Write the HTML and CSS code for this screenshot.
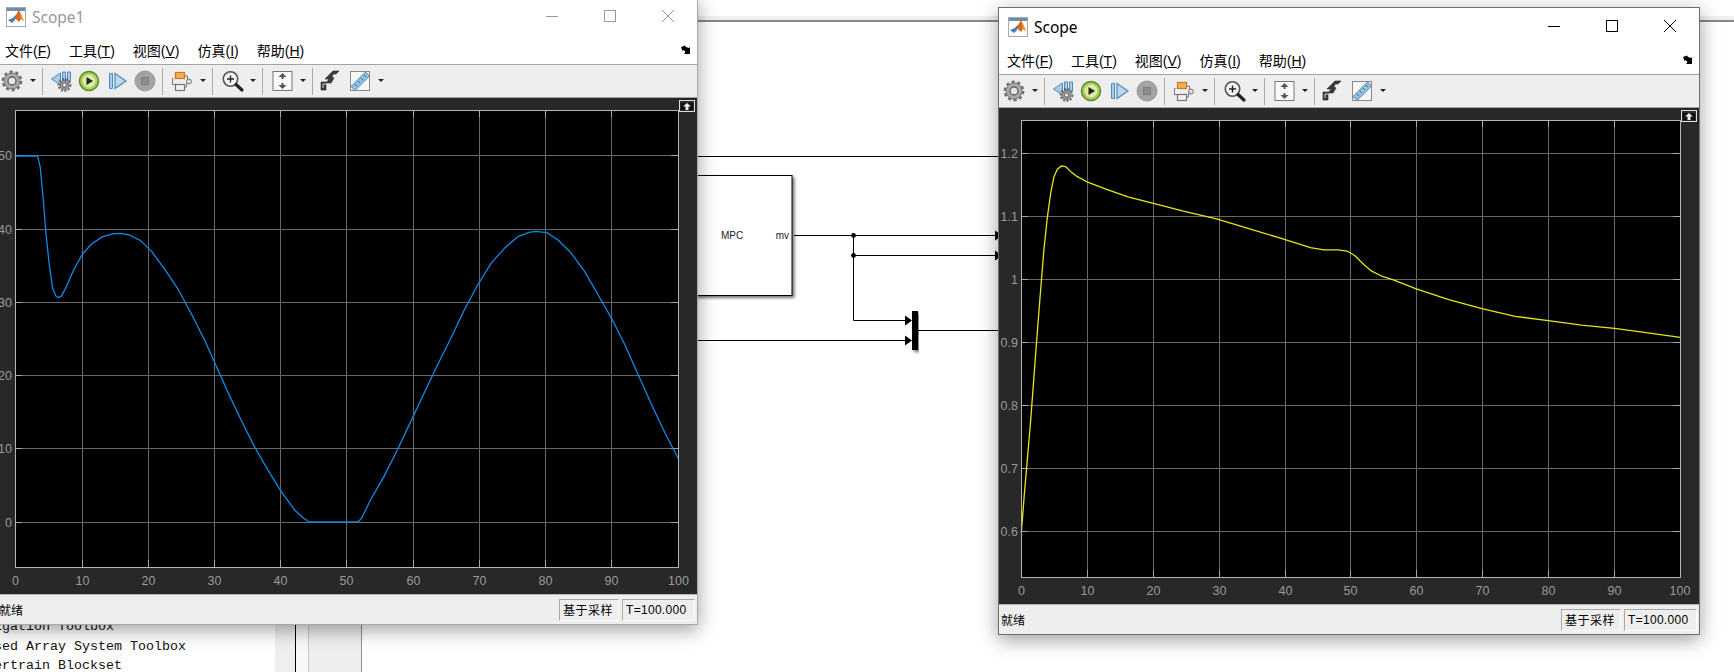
FILE: index.html
```html
<!DOCTYPE html>
<html lang="en">
<head>
    <meta charset="UTF-8">
    <meta name="viewport" content="width=device-width, initial-scale=1.0">
    <title>Scope</title>
    <link rel="stylesheet" href="styles.css">
</head>
<body>
    <!-- shared icons -->
    <svg class="icon-defs" width="0" height="0">
        <defs>
            <symbol id="i-matlab" viewBox="0 0 20 20">
                <rect x="0.5" y="0.5" width="19" height="19" fill="#fff" stroke="#a8a8a8"/>
                <rect x="1" y="1" width="18" height="3" fill="#6d8db0"/>
                <path d="M2 13l5-2 3-3 3-5 2 4 3 7-3-2-2 3-3-3-3-1z" fill="#d9661f"/>
                <path d="M2 13l5-2 3-3-1 5-3 3z" fill="#3f7fb5"/>
                <path d="M13 3l2 4 3 7-3-2z" fill="#f0a030"/>
            </symbol>
            <symbol id="i-gear" viewBox="0 0 24 24">
                <circle cx="12" cy="12" r="9.2" fill="none" stroke="#6f6f6f" stroke-width="2.4" stroke-dasharray="3.2 2.6"/>
                <circle cx="12" cy="12" r="8" fill="#a9a9a9" stroke="#777"/>
                <circle cx="12" cy="12" r="4" fill="#e6e6e6" stroke="#666" stroke-width="1.4"/>
            </symbol>
            <symbol id="i-rewind" viewBox="0 0 24 24">
                <path d="M2 10l9-6v12z" fill="#a9cbe8" stroke="#4f8bbd"/>
                <path d="M13 3h3v9h-3zM18 3h3v9h-3z" fill="#a9cbe8" stroke="#4f8bbd"/>
                <circle cx="15" cy="16" r="6" fill="none" stroke="#666" stroke-width="1.8" stroke-dasharray="2 1.6"/>
                <circle cx="15" cy="16" r="4.6" fill="#9a9a9a" stroke="#666"/>
                <circle cx="15" cy="16" r="2" fill="#eee" stroke="#555" stroke-width=".8"/>
            </symbol>
            <symbol id="i-play" viewBox="0 0 24 24">
                <circle cx="12" cy="12" r="9.5" fill="#a9cf5a" stroke="#5b8a2b" stroke-width="1.5"/>
                <circle cx="12" cy="12" r="6.5" fill="#dcebb0"/>
                <path d="M9.5 8l6.5 4-6.500 4z" fill="#1f2a12"/>
            </symbol>
            <symbol id="i-step" viewBox="0 0 24 24">
                <path d="M4.500 4.500h3v15h-3z" fill="#a9cbe8" stroke="#4f8bbd"/>
                <path d="M10 4.500l11 7.500-11 7.500z" fill="#bcd7ee" stroke="#4f8bbd" stroke-width="1.2"/>
            </symbol>
            <symbol id="i-stop" viewBox="0 0 24 24">
                <circle cx="12" cy="12" r="10" fill="#a3a3a3" stroke="#999"/>
                <rect x="8.500" y="8.500" width="7" height="7" fill="#8b8b8b" stroke="#7d7d7d"/>
            </symbol>
            <symbol id="i-blocks" viewBox="0 0 24 24">
                <path d="M3 9.500h-1v6h3M13 7h4v4" fill="none" stroke="#777"/>
                <rect x="5" y="3.500" width="9" height="6" fill="#f2b05a" stroke="#cc7a1c" stroke-width="1.2"/>
                <circle cx="18.500" cy="12.500" r="2.500" fill="#ddd" stroke="#777"/>
                <path d="M16 14v4h-2" fill="none" stroke="#777"/>
                <rect x="5" y="15.500" width="9" height="6" fill="#f1f1f1" stroke="#777" stroke-width="1.2"/>
            </symbol>
            <symbol id="i-zoom" viewBox="0 0 24 24">
                <circle cx="10" cy="10" r="7.200" fill="#f4f6f6" stroke="#555" stroke-width="1.600"/>
                <path d="M6.500 10h7M10 6.500v7" stroke="#222" stroke-width="1.400"/>
                <path d="M15.500 15.500l6 5.500" stroke="#222" stroke-width="3.200" stroke-linecap="round"/>
            </symbol>
            <symbol id="i-fit" viewBox="0 0 24 24">
                <rect x="2.500" y="2.500" width="19" height="19" fill="#fafafa" stroke="#777"/>
                <path d="M12 4l4 4h-3v2h-2v-2h-3zM12 20l4-4h-3v-2h-2v2h-3z" fill="#555"/>
            </symbol>
            <symbol id="i-trigger" viewBox="0 0 24 24">
                <path d="M3 21v-8h6l2-3h-4l8-8h6l-3 3h-3l-1 3 2 1-3 5h-5v7z" fill="#3d3d3d" stroke="#222" stroke-width=".6"/>
                <path d="M5 19v-4h5" fill="none" stroke="#ccc"/>
            </symbol>
            <symbol id="i-ruler" viewBox="0 0 24 24">
                <rect x="2.500" y="2.500" width="19" height="19" fill="#f8f8f8" stroke="#888"/>
                <path d="M3 17.500l14.500-14.500 4 4-14.500 14.500z" fill="#8fc0e2" stroke="#5288ad"/>
                <path d="M7 15l2 2M10 12l2 2M13 9l2 2M16 6l2 2" stroke="#3f6f90"/>
            </symbol>
            <symbol id="i-undock" viewBox="0 0 12 10">
                <path d="M0 2l4-1.500 1 1.500 3 1 1-1v7h-6l1.500-2-2-2-1 1z" fill="#000"/>
            </symbol>
            <symbol id="i-expand" viewBox="0 0 16 12">
                <rect x="0.500" y="0.500" width="15" height="11" fill="#2b2b2b" stroke="#ddd"/>
                <rect x="2" y="3" width="12" height="7" fill="#111"/>
                <path d="M8 3l4 3.500h-2.500v3.500h-3v-3.500h-2.500z" fill="#eee"/>
            </symbol>
        </defs>
    </svg>

    <!-- model canvas behind the scope windows -->
    <div class="lib-strips">
        <div class="strip strip-a"></div>
        <div class="strip strip-b"></div>
        <div class="strip strip-c"></div>
    </div>
    <div class="lib-list">
        <div>Navigation Toolbox</div>
        <div>Phased Array System Toolbox</div>
        <div>Powertrain Blockset</div>
    </div>

    <svg class="canvas" viewBox="0 0 1734 672">
        <defs>
            <filter id="block-shadow" x="-10%" y="-10%" width="120%" height="120%">
                <feDropShadow dx="2" dy="2" stdDeviation="1.500" flood-color="#000" flood-opacity=".55"/>
            </filter>
        </defs>
        <rect x="0" y="16" width="1734" height="4" fill="#f0f0f0"/>
        <rect x="0" y="20" width="1734" height="2" fill="#808890"/>
        <path class="wire" d="M690 156.500H1000"/>
        <rect class="block" x="680" y="175.500" width="112" height="120" filter="url(#block-shadow)"/>
        <text class="block-text" x="732" y="238.500" text-anchor="middle">MPC</text>
        <text class="block-text" x="789" y="238.500" text-anchor="end">mv</text>
        <path class="wire" d="M794 235.500H1000M853.500 235.500V320.500H906M853.500 255.500H1000M690 340.500H906M918 330.500H1000"/>
        <circle cx="853.500" cy="235.500" r="2.400"/>
        <circle cx="853.500" cy="255.500" r="2.400"/>
        <path d="M995 230.500l7 5-7 5zM995 250.500l7 5-7 5zM905 315.500l7 5-7 5zM905 335.500l7 5-7 5z"/>
        <rect x="912" y="311" width="6" height="39" filter="url(#block-shadow)"/>
    </svg>

    <!-- Scope1 (inactive) -->
    <div class="scope-window scope-left inactive">
        <div class="title-bar">
            <svg class="app-icon"><use href="#i-matlab"/></svg>
            <span class="title-text">Scope1</span>
            <div class="win-controls">
                <svg class="win-btn" viewBox="0 0 12 12"><path d="M0 6.500H12"/></svg>
                <svg class="win-btn" viewBox="0 0 12 12"><rect x="0.500" y="0.500" width="11" height="11"/></svg>
                <svg class="win-btn" viewBox="0 0 12 12"><path d="M0 0L12 12M12 0L0 12"/></svg>
            </div>
        </div>
        <div class="menu-bar">
            <span class="menu-item">文件(<u>F</u>)</span>
            <span class="menu-item">工具(<u>T</u>)</span>
            <span class="menu-item">视图(<u>V</u>)</span>
            <span class="menu-item">仿真(<u>I</u>)</span>
            <span class="menu-item">帮助(<u>H</u>)</span>
            <svg class="undock"><use href="#i-undock"/></svg>
        </div>
        <div class="tool-bar">
            <svg class="tool w30"><use href="#i-gear"/></svg><span class="caret"></span><span class="sep"></span>
            <svg class="tool w27"><use href="#i-rewind"/></svg><svg class="tool w28"><use href="#i-play"/></svg><svg class="tool w28"><use href="#i-step"/></svg><svg class="tool w28"><use href="#i-stop"/></svg><span class="sep"></span>
            <svg class="tool w29"><use href="#i-blocks"/></svg><span class="caret"></span><span class="sep"></span>
            <svg class="tool w29"><use href="#i-zoom"/></svg><span class="caret"></span><span class="sep"></span>
            <svg class="tool w29"><use href="#i-fit"/></svg><span class="caret"></span><span class="sep"></span>
            <svg class="tool w24"><use href="#i-trigger"/></svg><svg class="tool w30 ml3"><use href="#i-ruler"/></svg><span class="caret"></span>
        </div>
        <svg class="plot" viewBox="-3 98 700 496">
            <rect class="axes-bg" x="15.500" y="110.500" width="663" height="457"/>
            <path class="grid" d="M82.500 110V567M148.500 110V567M214.500 110V567M280.500 110V567M346.500 110V567M413.500 110V567M479.500 110V567M545.500 110V567M611.500 110V567M15 155.500H678M15 229.500H678M15 302.500H678M15 375.500H678M15 448.500H678M15 522.500H678"/>
            <path class="ticks" d="M82.500 110v7M148.500 110v7M214.500 110v7M280.500 110v7M346.500 110v7M413.500 110v7M479.500 110v7M545.500 110v7M611.500 110v7M82.500 567v-7M148.500 567v-7M214.500 567v-7M280.500 567v-7M346.500 567v-7M413.500 567v-7M479.500 567v-7M545.500 567v-7M611.500 567v-7M15 155.500h7M15 229.500h7M15 302.500h7M15 375.500h7M15 448.500h7M15 522.500h7M678 155.500h-7M678 229.500h-7M678 302.500h-7M678 375.500h-7M678 448.500h-7M678 522.500h-7"/>
            <polyline class="curve curve-blue" transform="translate(0 100) scale(.4464 .3333)" points="35,168 84,168 90,200 97,300 103,400 110,490 118,565 125,588 131,593 137,589 147,565 165,510 185,462 205,432 230,410 255,401 270,400 290,405 315,422 340,455 370,510 400,570 430,645 460,725 480,785 510,875 540,960 570,1040 600,1110 630,1175 660,1230 680,1255 693,1266 802,1266 810,1255 830,1200 860,1130 890,1050 920,965 950,880 980,795 1010,715 1040,630 1070,555 1100,490 1130,445 1160,410 1185,397 1200,394 1225,398 1250,420 1280,460 1310,515 1340,585 1370,655 1400,735 1430,825 1460,915 1490,1000 1520,1077"/>
            <rect class="axes-box" x="15.500" y="110.500" width="663" height="457"/>
            <text class="ylabel" x="12" y="160">50</text>
            <text class="ylabel" x="12" y="234">40</text>
            <text class="ylabel" x="12" y="307">30</text>
            <text class="ylabel" x="12" y="380">20</text>
            <text class="ylabel" x="12" y="453">10</text>
            <text class="ylabel" x="12" y="527">0</text>
            <text class="xlabel" x="15.500" y="585">0</text>
            <text class="xlabel" x="82.500" y="585">10</text>
            <text class="xlabel" x="148.500" y="585">20</text>
            <text class="xlabel" x="214.500" y="585">30</text>
            <text class="xlabel" x="280.500" y="585">40</text>
            <text class="xlabel" x="346.500" y="585">50</text>
            <text class="xlabel" x="413.500" y="585">60</text>
            <text class="xlabel" x="479.500" y="585">70</text>
            <text class="xlabel" x="545.500" y="585">80</text>
            <text class="xlabel" x="611.500" y="585">90</text>
            <text class="xlabel" x="678.500" y="585">100</text>
            <use href="#i-expand" x="679" y="100" width="16" height="12"/>
        </svg>
        <div class="status-bar">
            <span class="status-text">就绪</span>
            <span class="status-box box-mode">基于采样</span>
            <span class="status-box box-time">T=100.000</span>
        </div>
    </div>

    <!-- Scope (active) -->
    <div class="scope-window scope-right">
        <div class="title-bar">
            <svg class="app-icon"><use href="#i-matlab"/></svg>
            <span class="title-text">Scope</span>
            <div class="win-controls">
                <svg class="win-btn" viewBox="0 0 12 12"><path d="M0 6.500H12"/></svg>
                <svg class="win-btn" viewBox="0 0 12 12"><rect x="0.500" y="0.500" width="11" height="11"/></svg>
                <svg class="win-btn" viewBox="0 0 12 12"><path d="M0 0L12 12M12 0L0 12"/></svg>
            </div>
        </div>
        <div class="menu-bar">
            <span class="menu-item">文件(<u>F</u>)</span>
            <span class="menu-item">工具(<u>T</u>)</span>
            <span class="menu-item">视图(<u>V</u>)</span>
            <span class="menu-item">仿真(<u>I</u>)</span>
            <span class="menu-item">帮助(<u>H</u>)</span>
            <svg class="undock"><use href="#i-undock"/></svg>
        </div>
        <div class="tool-bar">
            <svg class="tool w30"><use href="#i-gear"/></svg><span class="caret"></span><span class="sep"></span>
            <svg class="tool w27"><use href="#i-rewind"/></svg><svg class="tool w28"><use href="#i-play"/></svg><svg class="tool w28"><use href="#i-step"/></svg><svg class="tool w28"><use href="#i-stop"/></svg><span class="sep"></span>
            <svg class="tool w29"><use href="#i-blocks"/></svg><span class="caret"></span><span class="sep"></span>
            <svg class="tool w29"><use href="#i-zoom"/></svg><span class="caret"></span><span class="sep"></span>
            <svg class="tool w29"><use href="#i-fit"/></svg><span class="caret"></span><span class="sep"></span>
            <svg class="tool w24"><use href="#i-trigger"/></svg><svg class="tool w30 ml3"><use href="#i-ruler"/></svg><span class="caret"></span>
        </div>
        <svg class="plot" viewBox="999 108 700 496">
            <rect class="axes-bg" x="1021.500" y="120.500" width="659" height="457"/>
            <path class="grid" d="M1087.500 120V577M1153.500 120V577M1219.500 120V577M1285.500 120V577M1350.500 120V577M1416.500 120V577M1482.500 120V577M1548.500 120V577M1614.500 120V577M1021 153.500H1680M1021 216.500H1680M1021 279.500H1680M1021 342.500H1680M1021 405.500H1680M1021 468.500H1680M1021 531.500H1680"/>
            <path class="ticks" d="M1087.500 120v7M1153.500 120v7M1219.500 120v7M1285.500 120v7M1350.500 120v7M1416.500 120v7M1482.500 120v7M1548.500 120v7M1614.500 120v7M1087.500 577v-7M1153.500 577v-7M1219.500 577v-7M1285.500 577v-7M1350.500 577v-7M1416.500 577v-7M1482.500 577v-7M1548.500 577v-7M1614.500 577v-7M1021 153.500h7M1021 216.500h7M1021 279.500h7M1021 342.500h7M1021 405.500h7M1021 468.500h7M1021 531.500h7M1680 153.500h-7M1680 216.500h-7M1680 279.500h-7M1680 342.500h-7M1680 405.500h-7M1680 468.500h-7M1680 531.500h-7"/>
            <polyline class="curve curve-yellow" transform="scale(1.1059)" points="923.500,482 926,450 929,415 932,380 935,340 938,300 941,262 944,225 947,197 950,175 953,160 956,153 960,150 964,151 968,155 973,159 984,165 1000,171 1020,178 1043,184 1070,191 1100,198 1130,207 1160,216 1185,224 1197,226 1210,226 1218,227 1225,231 1232,238 1240,245 1250,250 1260,253 1280,261 1310,271 1340,279 1370,286 1400,290 1430,294 1460,297 1490,301 1519.500,305"/>
            <rect class="axes-box" x="1021.500" y="120.500" width="659" height="457"/>
            <text class="ylabel" x="1018" y="158">1.2</text>
            <text class="ylabel" x="1018" y="221">1.1</text>
            <text class="ylabel" x="1018" y="284">1</text>
            <text class="ylabel" x="1018" y="347">0.9</text>
            <text class="ylabel" x="1018" y="410">0.8</text>
            <text class="ylabel" x="1018" y="473">0.7</text>
            <text class="ylabel" x="1018" y="536">0.6</text>
            <text class="xlabel" x="1021.500" y="595">0</text>
            <text class="xlabel" x="1087.500" y="595">10</text>
            <text class="xlabel" x="1153.500" y="595">20</text>
            <text class="xlabel" x="1219.500" y="595">30</text>
            <text class="xlabel" x="1285.500" y="595">40</text>
            <text class="xlabel" x="1350.500" y="595">50</text>
            <text class="xlabel" x="1416.500" y="595">60</text>
            <text class="xlabel" x="1482.500" y="595">70</text>
            <text class="xlabel" x="1548.500" y="595">80</text>
            <text class="xlabel" x="1614.500" y="595">90</text>
            <text class="xlabel" x="1680" y="595">100</text>
            <use href="#i-expand" x="1681" y="110" width="16" height="12"/>
        </svg>
        <div class="status-bar">
            <span class="status-text">就绪</span>
            <span class="status-box box-mode">基于采样</span>
            <span class="status-box box-time">T=100.000</span>
        </div>
    </div>
</body>
</html>
```

FILE: styles.css
```css
body {
    margin: 0;
    width: 1734px;
    height: 672px;
    position: relative;
    overflow: hidden;
    background: #fff;
    font-family: "Liberation Sans", "Noto Sans CJK SC", sans-serif;
    color: #000;
}
.icon-defs {
    position: absolute;
}

/* model canvas */
.canvas {
    position: absolute;
    left: 0;
    top: 0;
    width: 1734px;
    height: 672px;
}
.wire {
    fill: none;
    stroke: #000;
    stroke-width: 1;
}
.block {
    fill: #fff;
    stroke: #000;
    stroke-width: 1;
}
.block-text {
    font-size: 10px;
    fill: #222;
}
.lib-list {
    position: absolute;
    left: -30px;
    top: 617px;
    font-family: "Liberation Mono", monospace;
    font-size: 13.33px;
    line-height: 19.7px;
    white-space: nowrap;
    color: #111;
}
.lib-strips {
    position: absolute;
    left: 275px;
    top: 600px;
    height: 72px;
    display: flex;
}
.strip {
    height: 100%;
    box-sizing: border-box;
}
.strip-a {
    width: 21px;
    background: #efefef;
    border-right: 1px solid #000;
}
.strip-b {
    width: 13px;
    background: #f8f8f8;
    border-right: 1px solid #c8c8c8;
}
.strip-c {
    width: 53px;
    background: #eee;
    border-right: 1px solid #909090;
}

/* scope windows */
.scope-window {
    position: absolute;
    width: 702px;
    height: 628px;
    box-sizing: border-box;
    display: flex;
    flex-direction: column;
    background: #fff;
    border: 1px solid #6e6e6e;
    box-shadow: 0 5px 18px rgba(0, 0, 0, 0.38);
}
.scope-left {
    left: -4px;
    top: -3px;
}
.scope-right {
    left: 998px;
    top: 7px;
}
.scope-window.inactive {
    border-color: #a8a8a8;
}
.title-bar {
    height: 38px;
    flex: none;
    display: flex;
    align-items: center;
    padding-left: 9px;
}
.app-icon {
    width: 20px;
    height: 20px;
    margin-right: 6px;
}
.title-text {
    font-family: "Noto Sans", sans-serif;
    font-size: 15.5px;
}
.inactive .title-text {
    color: #999;
}
.win-controls {
    margin-left: auto;
    display: flex;
    align-self: flex-start;
    height: 36px;
    align-items: center;
}
.win-btn {
    width: 12px;
    height: 12px;
    padding: 0 23px;
    fill: none;
    stroke: #000;
    stroke-width: 1;
}
.inactive .win-btn {
    stroke: #999;
}
.menu-bar {
    height: 28px;
    flex: none;
    display: flex;
    align-items: center;
    padding-left: 8px;
    gap: 18px;
    font-size: 14px;
    border-bottom: 1px solid #a3a3a3;
}
.undock {
    width: 12px;
    height: 10px;
    margin-left: auto;
    margin-right: 4px;
}
.tool-bar {
    height: 32px;
    flex: none;
    display: flex;
    align-items: center;
    background: #eee;
    border-bottom: 1px solid #a3a3a3;
}
.tool {
    height: 24px;
    flex: none;
}
.w24 { width: 24px; }
.w27 { width: 27px; }
.w28 { width: 28px; }
.w29 { width: 29px; }
.w30 { width: 30px; }
.ml3 { margin-left: 3px; }
.caret {
    width: 12px;
    height: 4px;
    flex: none;
    position: relative;
}
.caret::after {
    content: "";
    position: absolute;
    left: 3px;
    top: 0;
    border-left: 3.5px solid transparent;
    border-right: 3.5px solid transparent;
    border-top: 3.5px solid #222;
}
.sep {
    width: 1px;
    height: 27px;
    flex: none;
    margin: 0 5px 0 3px;
    background: #aaa;
}

/* plot */
.plot {
    display: block;
    width: 700px;
    height: 496px;
    flex: none;
    background: #282828;
    border-bottom: 1px solid #b5b5b5;
}
.axes-bg {
    fill: #000;
}
.axes-box {
    fill: none;
    stroke: #b4b4b4;
    stroke-width: 1;
}
.grid {
    fill: none;
    stroke: #686868;
    stroke-width: 1;
}
.ticks {
    fill: none;
    stroke: #a8a8a8;
    stroke-width: 1;
}
.curve {
    fill: none;
    stroke-width: 1.3;
    stroke-linejoin: round;
    vector-effect: non-scaling-stroke;
}
.curve-blue {
    stroke: #0d8ae6;
}
.curve-yellow {
    stroke: #e6e61e;
}
.ylabel,
.xlabel {
    font-size: 12.5px;
    fill: #9a9a9a;
}
.ylabel {
    text-anchor: end;
}
.xlabel {
    text-anchor: middle;
}

/* status bar */
.status-bar {
    flex: 1;
    min-height: 0;
    display: flex;
    align-items: center;
    padding: 0 2px;
    background: #eee;
    font-size: 12px;
}
.status-text {
    margin-right: auto;
}
.status-box {
    height: 22px;
    box-sizing: border-box;
    display: flex;
    align-items: center;
    padding-left: 3px;
    border: 1px solid;
    border-color: #a8a8a8 #fff #fff #a8a8a8;
    letter-spacing: 0.3px;
}
.box-mode {
    width: 60px;
    letter-spacing: 0.5px;
}
.box-time {
    width: 73px;
    margin-left: 3px;
}
```
